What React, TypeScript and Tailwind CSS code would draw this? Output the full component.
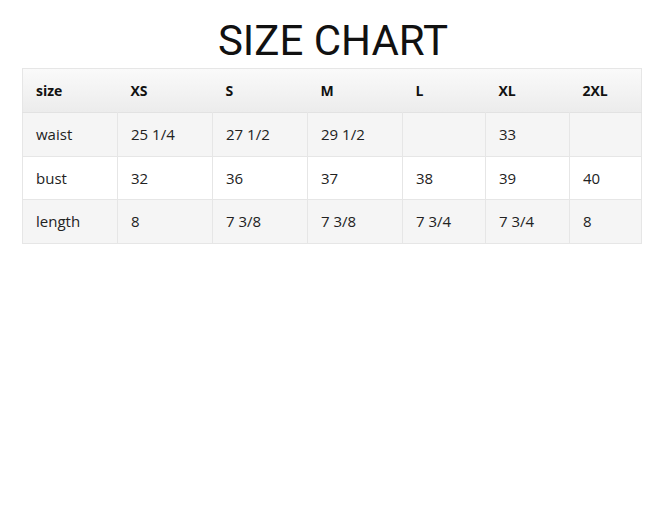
const cols = ["size", "XS", "S", "M", "L", "XL", "2XL"];
const widths = ["w-[95px]", "w-[95px]", "w-[95px]", "w-[95px]", "w-[83px]", "w-[84px]", "w-[72px]"];

const rows = [
  { label: "waist", values: ["25 1/4", "27 1/2", "29 1/2", "", "33", ""], bg: "bg-[#f5f5f5]" },
  { label: "bust", values: ["32", "36", "37", "38", "39", "40"], bg: "bg-white" },
  { label: "length", values: ["8", "7 3/8", "7 3/8", "7 3/4", "7 3/4", "8"], bg: "bg-[#f5f5f5]" },
];

export default function App() {
  return (
    <div className="h-[520px] w-[660px] bg-white pt-[16px]">
      <h1
        className="pl-[6px] text-center text-[42px] leading-[50px] text-[#111]"
        style={{ fontFamily: "Roboto, sans-serif" }}
      >
        SIZE CHART
      </h1>
      <table
        className="ml-[22px] mt-[2px] w-[619px] table-fixed border-collapse border border-[#e6e6e6] text-[15px] text-[#222]"
        style={{ fontFamily: "'Open Sans', 'Noto Sans', sans-serif" }}
      >
        <thead>
          <tr className="h-[44px] bg-[linear-gradient(180deg,#fafafa,#ececec)] border-b border-[#e2e2e2]">
            {cols.map((c, i) => (
              <th key={c} className={`${widths[i]} pl-[13px] text-left text-[14px] font-bold text-[#111]`}>
                {c}
              </th>
            ))}
          </tr>
        </thead>
        <tbody>
          {rows.map((r) => (
            <tr key={r.label} className={`h-[43.5px] ${r.bg} border-b border-[#e6e6e6]`}>
              <td className="pl-[13px]">{r.label}</td>
              {r.values.map((v, i) => (
                <td key={i} className="border-l border-[#e6e6e6] pl-[13px]">
                  {v}
                </td>
              ))}
            </tr>
          ))}
        </tbody>
      </table>
    </div>
  );
}
